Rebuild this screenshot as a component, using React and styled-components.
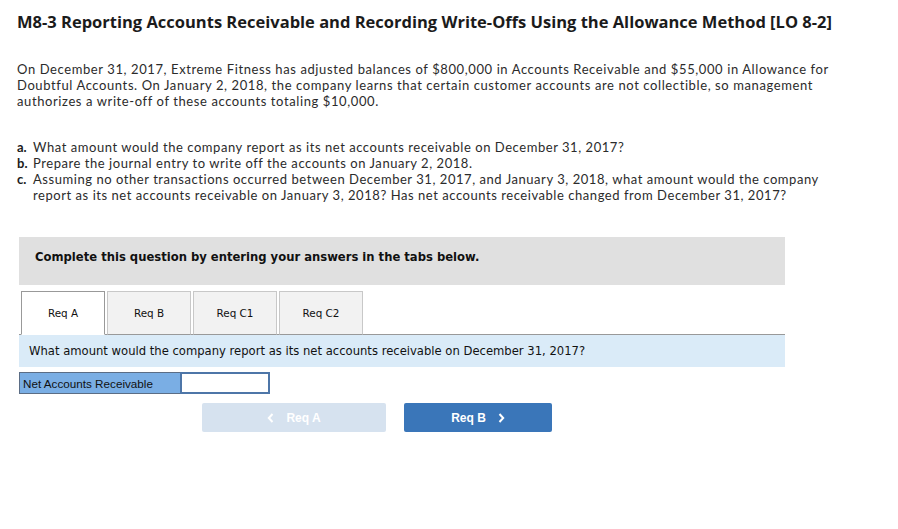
import styled, { createGlobalStyle } from 'styled-components';
import { useState } from 'react';

const GlobalStyle = createGlobalStyle`
  body {
    margin: 0;
    background: #fff;
    font-family: Lato, "Open Sans", Arial, sans-serif;
  }
`;

const Page = styled.div`
  width: 898px;
  padding: 0 0 0 17px;
  box-sizing: border-box;
`;

const Title = styled.h2`
  margin: 11px 0 0;
  font-family: "Open Sans", Arial, sans-serif;
  font-size: 16.5px;
  line-height: 22px;
  font-weight: 700;
  color: #1b1b1b;
`;

const Intro = styled.p`
  margin: 28px 0 0;
  font-size: 13px;
  letter-spacing: 0.6px;
  line-height: 16px;
  color: #2b2b2b;
`;

const Parts = styled.ol`
  list-style: none;
  margin: 30px 0 0;
  padding: 0;
  font-size: 13px;
  letter-spacing: 0.55px;
  line-height: 16px;
  color: #2b2b2b;
`;

const Part = styled.li`
  display: flex;
`;

const PartLabel = styled.b`
  width: 16px;
  flex: none;
  letter-spacing: 0;
  color: #1b1b1b;
`;

const Panel = styled.div`
  width: 766px;
  margin: 34px 0 0 2px;
  font-family: "DejaVu Sans", Verdana, sans-serif;
`;

const Instructions = styled.div`
  background: #e0e0e0;
  height: 48px;
  box-sizing: border-box;
  padding: 0 0 8px 16px;
  display: flex;
  align-items: center;
  font-size: 11.6px;
  font-weight: 700;
  color: #111;
`;

const Tabs = styled.div`
  display: flex;
  margin-top: 6px;
  padding-left: 2px;
  border-bottom: 1px solid #999;
  gap: 2px;
`;

const Tab = styled.button`
  width: 84px;
  height: 44px;
  margin-bottom: -1px;
  font-family: inherit;
  font-size: 10.4px;
  color: #111;
  cursor: pointer;
  background: ${p => (p.$active ? '#fff' : '#f2f2f2')};
  border: 1px solid ${p => (p.$active ? '#999' : '#c8c8c8')};
  border-bottom: ${p => (p.$active ? '1px solid #fff' : '1px solid #999')};
  padding: 0;
`;

const Question = styled.div`
  background: #daebf8;
  height: 32px;
  display: flex;
  align-items: center;
  padding-left: 10px;
  font-size: 11.6px;
  color: #111;
`;

const AnswerRow = styled.div`
  display: flex;
  margin-top: 5px;
  height: 22px;
`;

const AnswerLabel = styled.div`
  width: 161px;
  box-sizing: border-box;
  background: #7aaee4;
  border: 1px solid #5b6d85;
  border-right: none;
  display: flex;
  align-items: center;
  padding-left: 3px;
  font-family: "Liberation Sans", Arial, sans-serif;
  font-size: 11.7px;
  color: #111;
`;

const AnswerInput = styled.input`
  width: 90px;
  box-sizing: border-box;
  border: 2px solid #4e76a8;
  outline: none;
  padding: 0 4px;
  height: 22px;
`;

const Nav = styled.div`
  display: flex;
  gap: 18px;
  margin: 9px 0 0 183px;
`;

const NavButton = styled.button`
  height: 29px;
  width: ${p => p.$w}px;
  border: none;
  border-radius: 2px;
  background: ${p => (p.$disabled ? '#d6e2ef' : '#3a76b9')};
  color: #fff;
  font-family: "Liberation Sans", Arial, sans-serif;
  font-weight: 700;
  font-size: 12px;
  display: flex;
  align-items: center;
  justify-content: center;
  gap: 12px;
  cursor: ${p => (p.$disabled ? 'default' : 'pointer')};
`;

const Chevron = ({ dir }) => (
  <svg width="7" height="10" viewBox="0 0 7 10">
    <path
      d={dir === 'left' ? 'M5.5 1 L1.8 5 L5.5 9' : 'M1.5 1 L5.2 5 L1.5 9'}
      fill="none"
      stroke="#fff"
      strokeWidth="2"
    />
  </svg>
);

const tabs = ['Req A', 'Req B', 'Req C1', 'Req C2'];

export default function App() {
  const [active, setActive] = useState(0);
  const [value, setValue] = useState('');

  return (
    <>
      <GlobalStyle />
      <Page>
        <Title>
          M8-3 Reporting Accounts Receivable and Recording Write-Offs Using the Allowance Method [LO 8-2]
        </Title>
        <Intro>
          On December 31, 2017, Extreme Fitness has adjusted balances of $800,000 in Accounts Receivable and $55,000 in Allowance for
          <br />
          Doubtful Accounts. On January 2, 2018, the company learns that certain customer accounts are not collectible, so management
          <br />
          authorizes a write-off of these accounts totaling $10,000.
        </Intro>
        <Parts>
          <Part>
            <PartLabel>a.</PartLabel>
            <span>What amount would the company report as its net accounts receivable on December 31, 2017?</span>
          </Part>
          <Part>
            <PartLabel>b.</PartLabel>
            <span>Prepare the journal entry to write off the accounts on January 2, 2018.</span>
          </Part>
          <Part>
            <PartLabel>c.</PartLabel>
            <span>
              Assuming no other transactions occurred between December 31, 2017, and January 3, 2018, what amount would the company
              <br />
              report as its net accounts receivable on January 3, 2018? Has net accounts receivable changed from December 31, 2017?
            </span>
          </Part>
        </Parts>
        <Panel>
          <Instructions>Complete this question by entering your answers in the tabs below.</Instructions>
          <Tabs>
            {tabs.map((t, i) => (
              <Tab key={t} $active={i === active} onClick={() => setActive(i)}>
                {t}
              </Tab>
            ))}
          </Tabs>
          <Question>What amount would the company report as its net accounts receivable on December 31, 2017?</Question>
          <AnswerRow>
            <AnswerLabel>Net Accounts Receivable</AnswerLabel>
            <AnswerInput value={value} onChange={e => setValue(e.target.value)} />
          </AnswerRow>
          <Nav>
            <NavButton $w={184} $disabled>
              <Chevron dir="left" />
              Req A
            </NavButton>
            <NavButton $w={148}>
              Req B
              <Chevron dir="right" />
            </NavButton>
          </Nav>
        </Panel>
      </Page>
    </>
  );
}
